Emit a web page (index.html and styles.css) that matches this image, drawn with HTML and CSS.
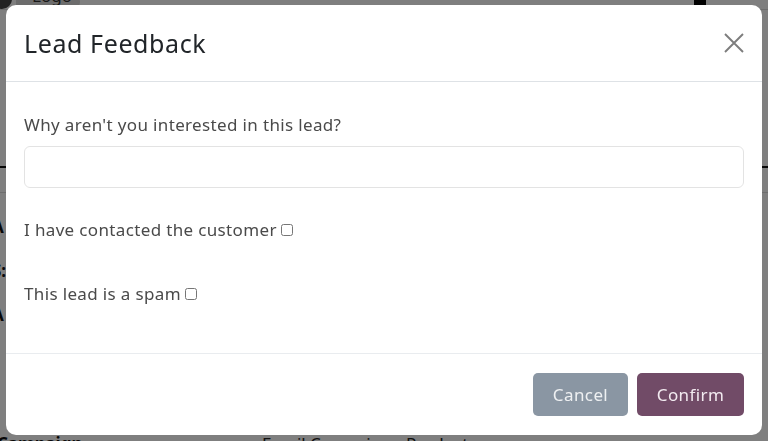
FILE: index.html
```html
<!DOCTYPE html>
<html lang="en">
<head>
<meta charset="utf-8">
<title>Lead Feedback</title>
<link rel="stylesheet" href="styles.css">
</head>
<body>
<div class="page">
  <div class="topbar">
    <span class="logo-icon"></span>
    <span class="logo">Logo</span>
    <span class="spacer"></span>
    <span class="avatar"></span>
  </div>
  <div class="sheet">
    <div class="rule rule-dark"></div>
    <div class="rule rule-light"></div>
    <div class="field">A</div>
    <div class="field">S:</div>
    <div class="field">A</div>
    <div class="bottomrow"><b class="bkey">Campaign</b><span class="bval">Email Campaign - Products</span></div>
  </div>
</div>
<div class="overlay">
  <div class="modal">
    <div class="modal-header">
      <h4 class="modal-title">Lead Feedback</h4>
      <button class="btn-close" aria-label="Close">
        <svg width="20" height="20" viewBox="0 0 20 20"><path d="M1 1L19 19M19 1L1 19" stroke="#7d7d7d" stroke-width="1.9" fill="none"/></svg>
      </button>
    </div>
    <div class="modal-body">
      <label class="q-label">Why aren't you interested in this lead?</label>
      <input class="text-input" type="text">
      <label class="check-row first">I have contacted the customer <input type="checkbox" class="chk"></label>
      <label class="check-row second">This lead is a spam <input type="checkbox" class="chk"></label>
    </div>
    <div class="modal-footer">
      <button class="btn btn-cancel">Cancel</button>
      <button class="btn btn-confirm">Confirm</button>
    </div>
  </div>
</div>
</body>
</html>
```
FILE: styles.css
```css
* { box-sizing: border-box; }
html, body { margin: 0; padding: 0; }
body {
  width: 768px;
  height: 441px;
  overflow: hidden;
  font-family: "Noto Sans", "Open Sans", sans-serif;
  background: #ffffff;
}
.page {
  height: 441px;
  overflow: hidden;
  color: #222;
}
.topbar {
  height: 14px;
  display: flex;
  align-items: flex-end;
  margin-top: -4px;
  border-bottom: 1px solid #ddd;
}
.logo-icon {
  width: 20px;
  height: 20px;
  margin-left: -8px;
  border-radius: 50%;
  background: #444;
}
.logo {
  margin-left: 4px;
  padding: 0 8px 0 16px;
  height: 14px;
  line-height: 2px;
  font-size: 17px;
  color: #333;
  background: #d8d8d8;
  border-radius: 0 8px 8px 0;
  overflow: hidden;
}
.spacer { flex: 1; }
.avatar {
  width: 12px;
  height: 18px;
  background: #000;
  margin-right: 62px;
  border-radius: 3px;
}
.sheet {
  padding-top: 156px;
}
.rule { height: 2px; width: 100%; }
.rule-dark { background: #111; }
.rule-light { background: #ddd; height: 1px; margin-top: 24px; }
.field {
  margin-left: -8px;
  font-weight: bold;
  font-size: 17px;
  line-height: 20px;
  color: #111;
  margin-top: 24px;
}
.field + .field { margin-top: 24px; }
.bottomrow {
  display: flex;
  margin-top: 109px;
  font-size: 17px;
  line-height: 20px;
}
.bkey { margin-left: -3px; width: 265px; color: #111; }
.bval { color: #222; }

.overlay {
  position: fixed;
  inset: 0;
  background: rgba(0, 0, 0, 0.5);
  display: flex;
  padding: 5px 6px 6px 6px;
}
.modal {
  flex: 1;
  background: #fff;
  border-radius: 10px;
  display: flex;
  flex-direction: column;
  overflow: hidden;
}
.modal-header {
  height: 77px;
  display: flex;
  align-items: center;
  padding: 0 18px;
  border-bottom: 1px solid #dee2e6;
}
.modal-title {
  flex: 1;
  margin: 0;
  font-weight: 400;
  font-size: 25px;
  letter-spacing: 0.6px;
  color: #212529;
  padding-top: 0;
}
.btn-close {
  border: 0;
  background: none;
  padding: 0;
  width: 20px;
  height: 20px;
  margin-right: 0;
  display: flex;
}
.modal-body {
  flex: 1;
  padding: 31px 18px 0 18px;
  display: flex;
  flex-direction: column;
  align-items: flex-start;
  color: #4a4a4a;
  font-size: 17px;
  letter-spacing: 0.35px;
}
.q-label { line-height: 24px; }
.text-input {
  width: 100%;
  height: 42px;
  margin-top: 9px;
  border: 1px solid #e3e3e3;
  border-radius: 6px;
  background: #fff;
}
.check-row {
  line-height: 24px;
  display: flex;
  align-items: center;
}
.check-row.first { margin-top: 30px; }
.check-row.second { margin-top: 40px; }
.chk {
  width: 12px;
  height: 12px;
  margin: 0 0 0 4px;
}
.modal-footer {
  height: 82px;
  border-top: 1px solid #e9ecef;
  display: flex;
  align-items: center;
  justify-content: flex-end;
  padding: 0 18px;
  gap: 9px;
}
.btn {
  height: 43px;
  border: 0;
  border-radius: 5px;
  font-family: "Noto Sans", "Open Sans", sans-serif;
  font-size: 17px;
  letter-spacing: 0.4px;
  padding: 0;
}
.btn-cancel {
  width: 95px;
  background: #8a96a3;
  color: #eef0f2;
}
.btn-confirm {
  width: 107px;
  background: #714b67;
  color: #f2eaf0;
}
```
